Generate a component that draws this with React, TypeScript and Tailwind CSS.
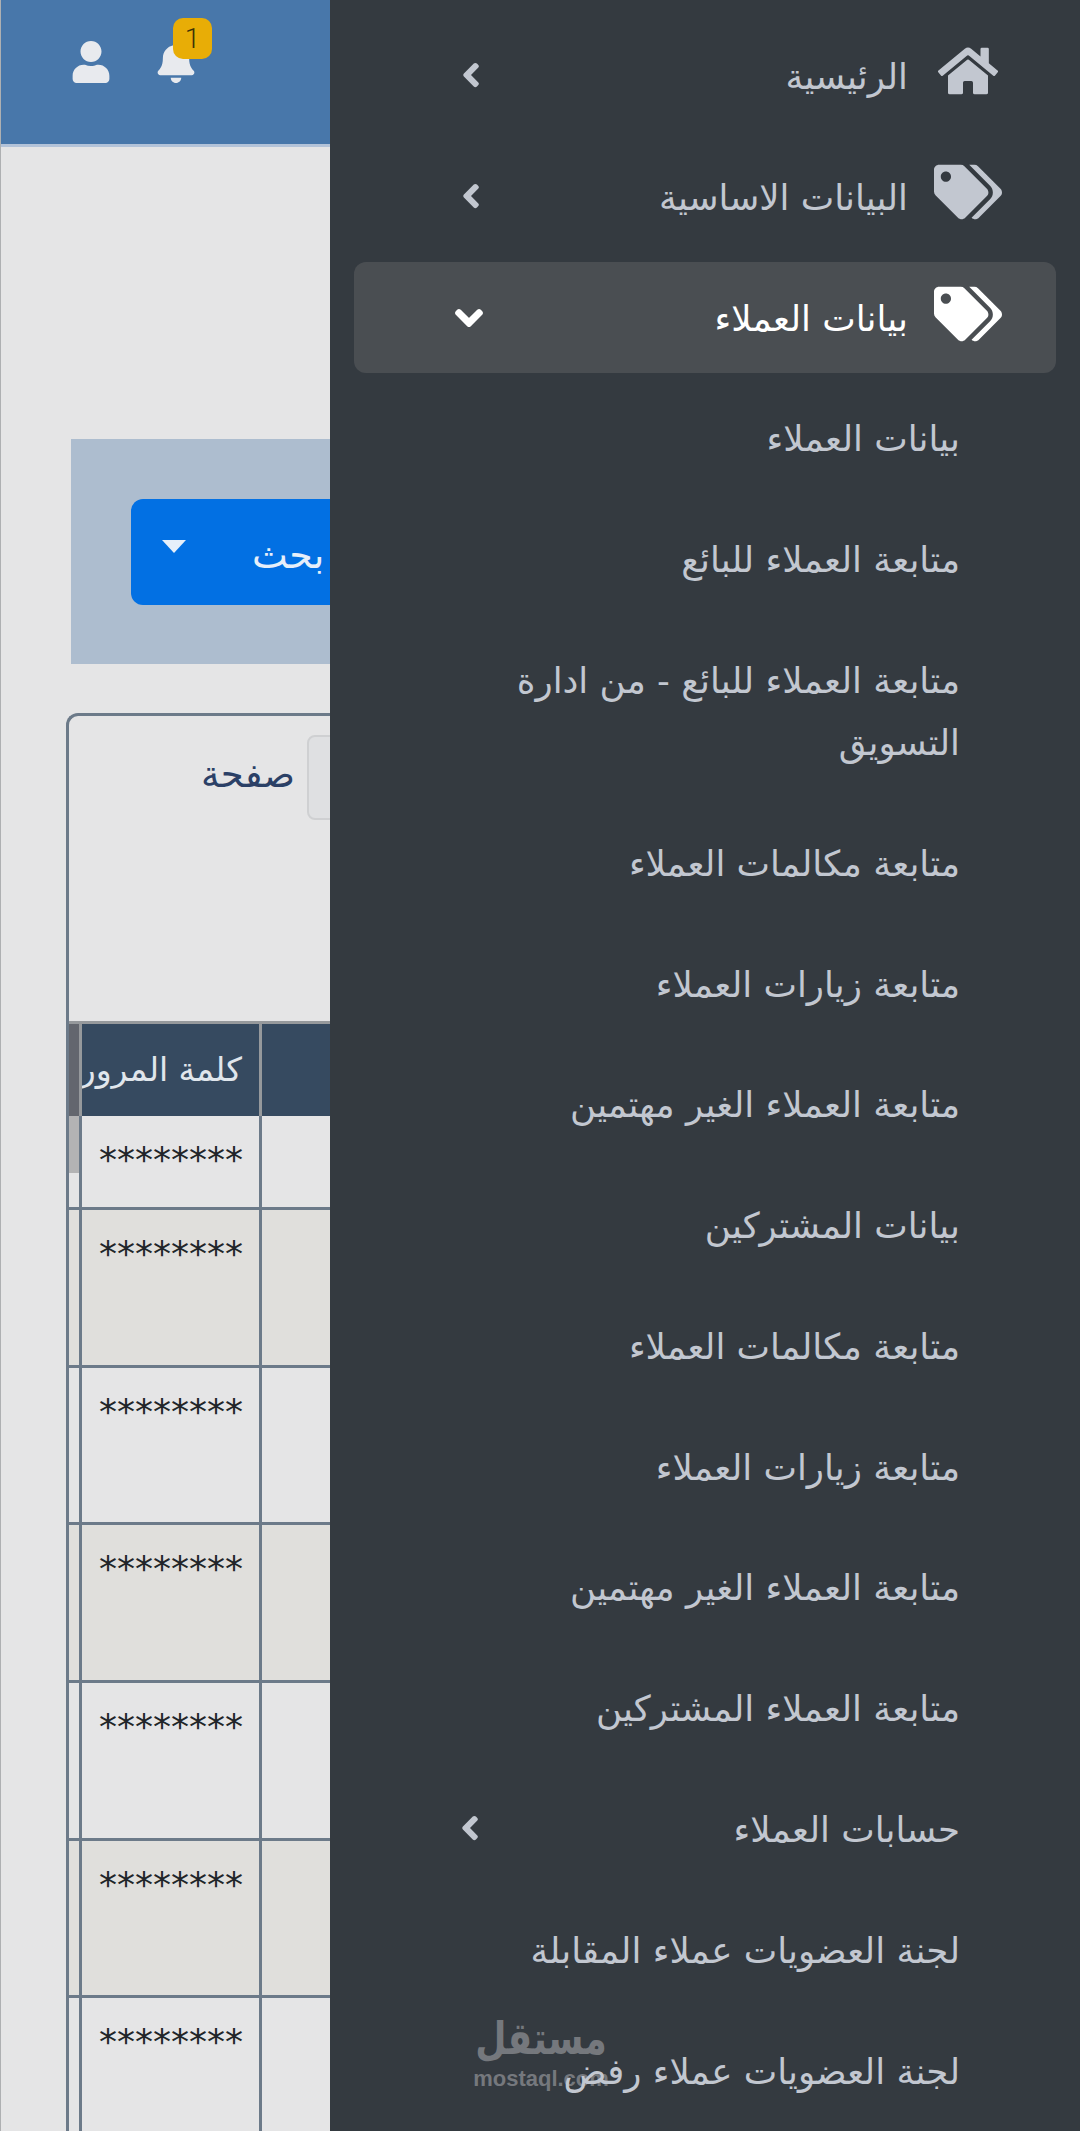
import React from 'react'
import { FaBell, FaChevronDown, FaChevronLeft, FaHome, FaTags, FaUser } from 'react-icons/fa'

const subItems = [
  'بيانات العملاء',
  'متابعة العملاء للبائع',
  'متابعة العملاء للبائع - من ادارة التسويق',
  'متابعة مكالمات العملاء',
  'متابعة زيارات العملاء',
  'متابعة العملاء الغير مهتمين',
  'بيانات المشتركين',
  'متابعة مكالمات العملاء',
  'متابعة زيارات العملاء',
  'متابعة العملاء الغير مهتمين',
  'متابعة العملاء المشتركين',
]

const rows = [
  { h: 'h-[94px]', bg: 'bg-[#e5e5e6]' },
  { h: 'h-[158px]', bg: 'bg-[#e0dfdc]' },
  { h: 'h-[157px]', bg: 'bg-[#e5e5e6]' },
  { h: 'h-[158px]', bg: 'bg-[#e0dfdc]' },
  { h: 'h-[158px]', bg: 'bg-[#e5e5e6]' },
  { h: 'h-[157px]', bg: 'bg-[#e0dfdc]' },
  { h: 'h-[158px]', bg: 'bg-[#e5e5e6]' },
]

function MainItem({ label, icon, active, chevron }: { label: string; icon: React.ReactNode; active?: boolean; chevron: React.ReactNode }) {
  return (
    <div className={`flex h-[110px] items-center rounded-xl pr-[54px] pl-[104px] ${active ? 'h-[111px] bg-[#4a4e52] text-white' : 'text-[#c2c7d0]'}`}>
      <span className="-mt-[8px] flex w-[68px] justify-center">{icon}</span>
      <span className="mt-[3px] mr-[26px] flex-1 text-[35.6px] leading-none">{label}</span>
      {chevron}
    </div>
  )
}

function SubItem({ label, chevron }: { label: string; chevron?: boolean }) {
  return (
    <div className="flex items-center px-[96px] py-[29.4px] text-[35.6px] leading-[62px] text-[#c2c7d0]">
      <span className="flex-1">{label}</span>
      {chevron && <FaChevronLeft className="-mt-[4px] ml-[7px] stroke-current stroke-[40px] text-[26px]" />}
    </div>
  )
}

function Sidebar() {
  return (
    <aside dir="rtl" className="relative h-full flex-1 overflow-hidden bg-[#343a40] px-[24px] pt-[20px]" style={{ fontFamily: '"DejaVu Sans", sans-serif' }}>
      <div className="flex flex-col gap-[11px]">
        <MainItem label="الرئيسية" icon={<FaHome className="text-[60px]" />} chevron={<FaChevronLeft className="stroke-current stroke-[40px] text-[26px]" />} />
        <MainItem label="البيانات الاساسية" icon={<FaTags className="text-[68px]" />} chevron={<FaChevronLeft className="stroke-current stroke-[40px] text-[26px]" />} />
        <MainItem label="بيانات العملاء" active icon={<FaTags className="text-[68px]" />} chevron={<FaChevronDown className="-ml-[4px] stroke-current stroke-[40px] text-[30px]" />} />
      </div>
      <div className="relative z-10 mt-[6px] flex flex-col">
        {subItems.map((label, i) => (
          <SubItem key={i} label={label} />
        ))}
        <SubItem label="حسابات العملاء" chevron />
        <SubItem label="لجنة العضويات عملاء المقابلة" />
        <SubItem label="لجنة العضويات عملاء رفض" />
      </div>
      {/* watermark */}
      <div className="absolute top-[2020px] left-[145px] flex w-[132px] flex-col items-center leading-none text-[#75787d]">
        <span className="h-[50px] origin-bottom scale-y-[1.25] text-[36px] leading-[50px] font-bold whitespace-nowrap">مستقل</span>
        <span dir="ltr" className="text-[22px] leading-[18px] font-bold" style={{ fontFamily: '"Liberation Sans", sans-serif' }}>mostaql.com</span>
      </div>
    </aside>
  )
}

function LeftPane() {
  return (
    <div className="flex h-full w-[330px] shrink-0 flex-col overflow-hidden border-l border-l-[#aeb0b2] bg-[#e5e5e6]" style={{ fontFamily: '"DejaVu Sans", sans-serif' }}>
      <header className="flex h-[147px] shrink-0 items-center border-b-[3px] border-b-[#b3c3d9] bg-[#4877aa] pb-[20px] pl-[69px]">
        <FaUser className="text-[42px] text-[#e8eaee]" />
        <div className="relative ml-[43px]">
          <FaBell className="text-[42px] text-[#e8eaee]" />
          <span className="absolute -top-[23px] left-[18px] flex h-[41px] w-[39px] items-center justify-center rounded-[10px] bg-[#e8ad06] text-[28px] font-light text-[#3b3208]" style={{ fontFamily: 'Roboto, sans-serif' }}>1</span>
        </div>
      </header>
      <div className="mt-[292px] ml-[70px] flex h-[225px] w-[300px] shrink-0 items-center bg-[#adbdcf] pl-[60px]">
        <div className="flex h-[106px] w-[300px] shrink-0 items-start rounded-l-xl bg-[#0270e3] pt-[38px] pl-[31px]">
          <span className="mt-[3px] h-0 w-0 border-x-[12px] border-t-[13px] border-x-transparent border-t-[#e6effa]" />
          <span dir="rtl" className="ml-[66px] text-[38px] leading-[36px] text-[#e6effa]">بحث</span>
        </div>
      </div>
      <section className="mt-[49px] ml-[65px] w-[300px] shrink-0 rounded-tl-xl border-t-[3px] border-l-[3px] border-[#6c7a89]">
        <div className="flex h-[305px] items-start pt-[19px]">
          <span dir="rtl" className="mt-[16px] ml-[132px] text-[37px] leading-[48px] text-[#2b4066]">صفحة</span>
          <span className="ml-[12px] h-[85px] w-[60px] shrink-0 rounded-l-lg border-2 border-[#cfd0d2] bg-[#dfe0e2]" />
        </div>
        <div className="flex h-[95px] border-t-[3px] border-t-[#96999c]">
          <div className="w-[10px] shrink-0 bg-[#63666e]" />
          <div className="w-[3px] shrink-0 bg-[#96999c]" />
          <div dir="rtl" className="flex w-[177px] shrink-0 items-center overflow-hidden bg-[#364a60] pr-[17px] text-[33px] whitespace-nowrap text-[#e0e6ec]">كلمة المرور</div>
          <div className="w-[3px] shrink-0 bg-[#96999c]" />
          <div className="flex-1 bg-[#364a60]" />
        </div>
        {rows.map((row, i) => (
          <div key={i} className={`flex border-b-[3px] border-b-[#6c7a89] ${row.h} ${row.bg}`}>
            <div className="relative w-[10px] shrink-0">
              {i === 0 && <div className="h-[57px] bg-[#b3b3b4]" />}
            </div>
            <div className="w-[3px] shrink-0 bg-[#6c7a89]" />
            <div className="w-[177px] shrink-0 pt-[24px] pr-[16px] text-right text-[36px] leading-[40px] text-[#212529]">********</div>
            <div className="w-[3px] shrink-0 bg-[#6c7a89]" />
            <div className="flex-1" />
          </div>
        ))}
      </section>
    </div>
  )
}

export default function App() {
  return (
    <div className="flex h-[2131px] w-[1080px] overflow-hidden">
      <LeftPane />
      <Sidebar />
    </div>
  )
}
